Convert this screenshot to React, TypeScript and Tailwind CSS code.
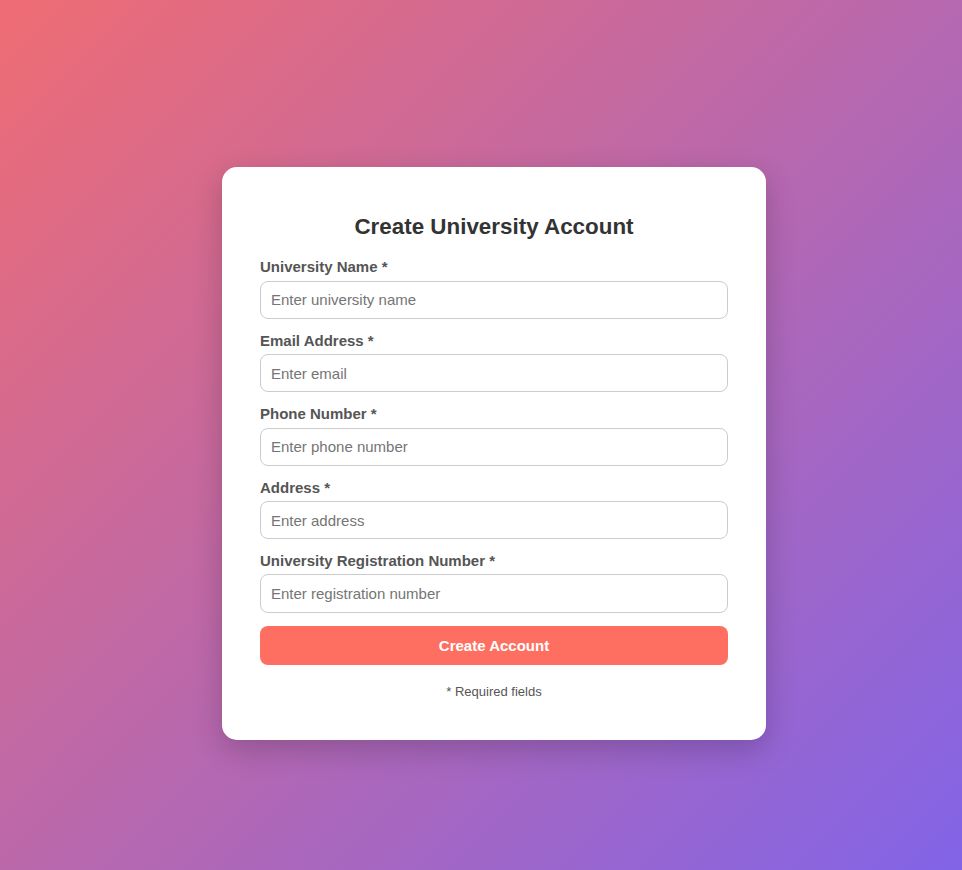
import React, { useState } from 'react';

const fields = [
  { name: 'name', label: 'University Name *', placeholder: 'Enter university name', type: 'text' },
  { name: 'email', label: 'Email Address *', placeholder: 'Enter email', type: 'email' },
  { name: 'phone', label: 'Phone Number *', placeholder: 'Enter phone number', type: 'tel' },
  { name: 'address', label: 'Address *', placeholder: 'Enter address', type: 'text' },
  { name: 'regNumber', label: 'University Registration Number *', placeholder: 'Enter registration number', type: 'text' },
];

const App = () => {
  const [form, setForm] = useState<Record<string, string>>({});

  const handleChange = (e: React.ChangeEvent<HTMLInputElement>) => {
    setForm({ ...form, [e.target.name]: e.target.value });
  };

  return (
    <div
      className="min-h-screen flex items-center justify-center pl-[26px] pt-[37px] bg-[linear-gradient(135deg,#ef6c73,#8264e7)]"
      style={{ fontFamily: '"Liberation Sans", Arial, sans-serif' }}
    >
      <div className="w-[544px] bg-white rounded-[15px] px-[38px] pt-[47px] pb-[41px] shadow-[0_10px_30px_rgba(0,0,0,0.2)]">
        <h2 className="text-center text-[22.4px] leading-[26px] font-bold text-[#333] mb-[18px]">
          Create University Account
        </h2>

        <form onSubmit={(e) => e.preventDefault()}>
          {fields.map((f) => (
            <div key={f.name} className="mb-[12.85px]">
              <label className="block text-[15px] leading-[17.25px] font-bold text-[#555] mb-[5px]">
                {f.label}
              </label>
              <input
                name={f.name}
                type={f.type}
                placeholder={f.placeholder}
                value={form[f.name] || ''}
                onChange={handleChange}
                className="block w-full h-[38.4px] px-[10px] text-[15px] text-[#333] border border-[#ccc] rounded-[8px] outline-none placeholder:text-[#757575] focus:border-[#ff6f61]"
              />
            </div>
          ))}

          <button
            type="submit"
            className="flex items-center justify-center w-full h-[39px] pt-[3px] bg-[#ff6f61] text-white text-[15px] font-bold rounded-[8px] hover:opacity-90 transition-opacity"
          >
            Create Account
          </button>
        </form>

        <p className="text-center text-[13px] leading-[15px] text-[#555] mt-[19px]">* Required fields</p>
      </div>
    </div>
  );
};

export default App;
